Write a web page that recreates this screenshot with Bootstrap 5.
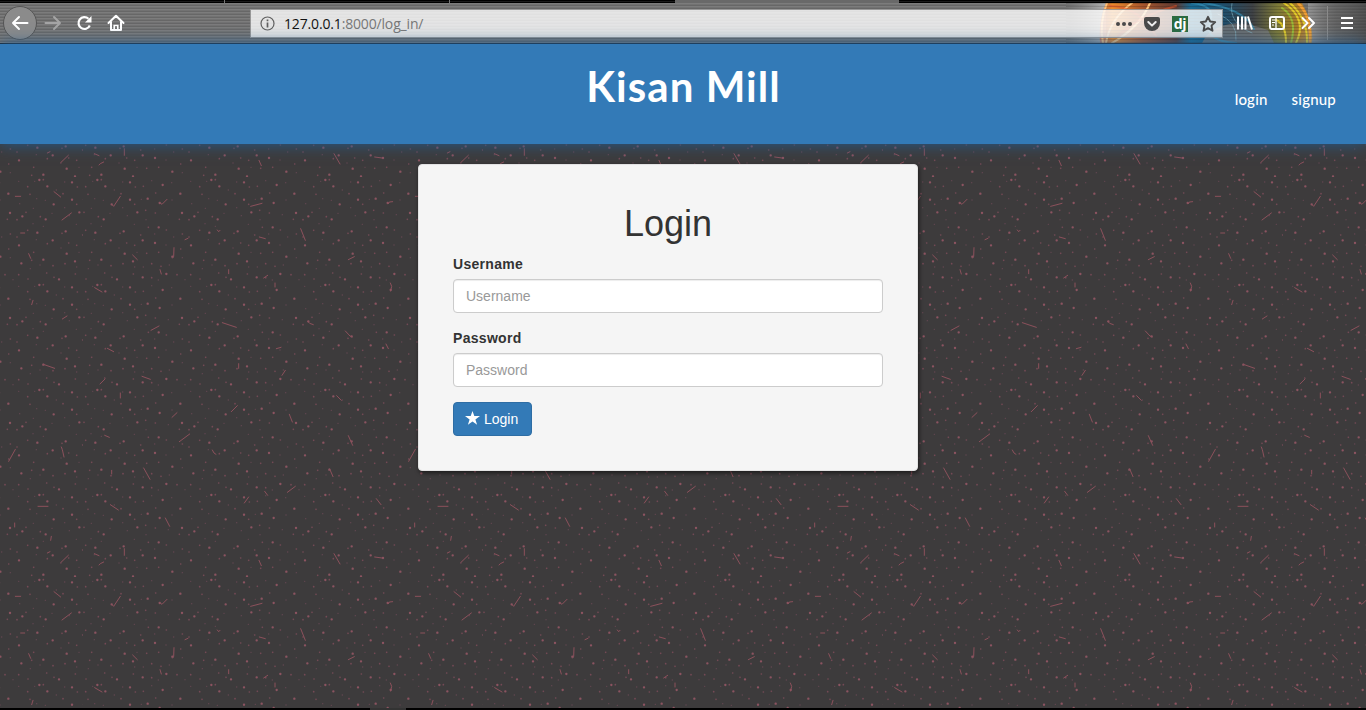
<!DOCTYPE html>
<html lang="en">
<head>
<meta charset="utf-8">
<meta name="viewport" content="width=device-width, initial-scale=1">
<title>Kisan Mill</title>
<link href="https://cdn.jsdelivr.net/npm/bootstrap@5.3.0/dist/css/bootstrap.min.css" rel="stylesheet">
<style>
html,body{height:100%;overflow:hidden}
body{font-family:"Liberation Sans",Arial,sans-serif;font-size:14px;line-height:20px;color:#333}
.tabstrip{height:3px;background:linear-gradient(#000 1px,#1b1b1b 1px 2px,#000 2px)}
.tabstrip .tab-edge{width:1px;margin-right:225px;background:#777}
.tabstrip .tab-edge.first{margin-left:224px;margin-right:224px}
.tabstrip .tab-active{width:224px;background:#696969}
.toolbar{height:41px;border-bottom:1px solid #1c2630;background:repeating-linear-gradient(#7c7c7c 0 1px,#727272 1px 2px,#676767 2px 3px)}
.theme-art{right:0;top:0;width:300px;height:40px}
.toolbar svg{display:block;flex:none}
.backbtn{width:34px;height:34px;margin-left:3px;border-radius:50%;background:#8b8b8b;border:1px solid #555}
.nav-icons{gap:14px;margin-left:13px}
.fwd-icon{margin-left:7px}
.urlbar{width:973px;height:29px;left:250px;top:6px;background:rgba(255,255,255,.8);border:1px solid rgba(100,100,100,.6);font:14px/27px "Open Sans","Noto Sans",sans-serif;color:#111}
.urlbar .dim{color:#777}
.info-icon{margin-left:9px}
.urltext{left:33px;top:0;letter-spacing:-.16px;white-space:nowrap}
.url-actions{gap:11px;margin-right:5px}
.djbadge{width:16px;height:16px;margin-left:1px;background:#2b6b41;color:#fff;font:bold 14px/15px "Open Sans",sans-serif;text-align:center;letter-spacing:-.3px}
.tool-icons{gap:14px;margin-right:10px}
.menu-icon{margin-left:8px}
.site-header{height:100px;background:#337ab7;box-shadow:0 0 15px #245d90;z-index:2}
.brand-title{font:bold 42px/46px Lato,sans-serif;letter-spacing:1.05px;color:#fff;padding:19px 0 0 1px}
.top-links{right:30px;top:45px;gap:24px}
.top-links a{font:500 15px/20px Lato,sans-serif;letter-spacing:.2px;color:#fff;text-decoration:none}
.page-area{background-color:#3d3b3c;background-position:83px 33px;background-image:url("data:image/svg+xml,%3Csvg xmlns='http://www.w3.org/2000/svg' width='400' height='400' viewBox='0 0 1200 1200'%3E%3Cdefs%3E%3Cpattern id='p' width='342' height='315' patternUnits='userSpaceOnUse'%3E%3Cg fill='none' stroke-linecap='round'%3E%3Cpath transform='translate(-195)' stroke='%238c5360' stroke-width='7' d='M238 9h.1M336 16h.1M434 24h.1M262 28h.1M487 50h.1M389 65h.1M336 68h.1M281 82h.1M425 78h.1M358 106h.1M492 108h.1M529 118h.1M257 127h.1M422 151h.1M317 163h.1M232 167h.1M278 190h.1M374 190h.1M411 198h.1M519 205h.1M320 230h.1M250 248h.1M345 253h.1M526 259h.1M463 239h.1M374 301h.1M297 307h.1M445 291h.1'/%3E%3Cpath transform='translate(-195)' stroke='%23754955' stroke-width='5' d='M203 29h.1M250 8h.1M352 30h.1M376 28h.1M210 52h.1M309 50h.1M413 48h.1M350 82h.1M383 100h.1M412 108h.1M241 119h.1M484 127h.1M513 128h.1M198 106h.1M203 160h.1M306 169h.1M368 174h.1M391 151h.1M445 159h.1M493 171h.1M513 180h.1M262 200h.1M326 198h.1M350 205h.1M221 226h.1M386 229h.1M422 226h.1M488 216h.1M215 250h.1M279 266h.1M315 260h.1M401 260h.1M429 268h.1M260 288h.1M282 301h.1M346 291h.1M401 302h.1M477 293h.1M518 293h.1M204 306h.1'/%3E%3Cpath transform='translate(-195)' stroke='%23624550' stroke-width='4' d='M224 13h.1M289 39h.1M314 15h.1M401 11h.1M461 17h.1M518 13h.1M230 65h.1M256 70h.1M314 92h.1M370 67h.1M462 69h.1M521 80h.1M220 94h.1M276 109h.1M328 116h.1M384 128h.1M451 113h.1M219 140h.1M250 148h.1M349 142h.1M410 171h.1M467 180h.1M229 188h.1M303 213h.1M357 226h.1M444 204h.1M211 275h.1M240 264h.1M350 270h.1M376 270h.1M454 264h.1M493 242h.1M501 308h.1M421 309h.1'/%3E%3C/g%3E%3C/pattern%3E%3C/defs%3E%3Crect width='1200' height='1200' fill='url(%23p)'/%3E%3Cg fill='none' stroke='%238e505b' stroke-width='2.900' stroke-linecap='round'%3E%3Cpath id='d' transform='translate(-195)' d='M108 44l20 16M132 129l28-21M282 83l5 5 20-30M427 78l5 4 15-15M698 88l34-9M1111 80l3-5 10-1M1192 58h16M8 168h12M32 230l6 14M501 188l9-4M468 212l-1 26-3 5M344 234l14 14M426 278l4 13M632 278v12M598 159l4 5 4-4M724 180l18 5M848 155l14 35M991 248l18-9M737 303l12-8M771 318v12M1117 318l4 10-3 14M230 332l22 13M45 370l-4 13M133 426l14-9M399 460l24-13M613 437l42 14M869 433l6 6 11 4M982 462l14 15 6 3M268 514l19 10M775 515l14-4M1104 501l7 14M76 562l34 12M662 560v14M802 580l-10 15M246 621l15-15M372 598l25 9M307 648v15M462 721l15-14M640 704l18-18M956 656l14 14M814 712l9 23M260 775l14 6M484 794l31-23M130 810l3 8 5 22M583 819l5 9 6 4M991 776l13 29M1172 853l20-36M377 873l19 34M281 880v11M935 876l10 23M60 988h30M277 983l24 16M808 946l24-18M692 960l-13 18M740 943l9 12M1075 965l14 18M442 1023l13 25M100 1078l-2 12M1190 1038v12M88 1128l8-4M128 1157l23-22M229 1130l14 6M319 1115v20M243 1164l4-4 10-5M723 1150l7 16M948 1130l18 31M1070 1140l22 3'/%3E%3Cuse href='%23d' x='1200'/%3E%3C/g%3E%3C/svg%3E")}
.login-panel{width:500px;height:307px;margin:20px 0 0 418px;padding:34px;background:#f5f5f5;border:1px solid #e3e3e3;border-radius:4px;box-shadow:1px 2px 4px rgba(0,0,0,.55)}
.login-panel h1{font-size:36px;line-height:40px;margin:5px 0 10px;color:#333}
.login-panel label{font-weight:700;margin-bottom:5px;display:block;letter-spacing:.3px}
.login-panel .form-control{height:34px;padding:6px 12px;font-size:14px;line-height:20px;border:1px solid #ccc;border-radius:4px;box-shadow:inset 0 1px 1px rgba(0,0,0,.075);margin-bottom:15px}
.login-panel .form-control::placeholder{color:#999}
.btn-login{height:34px;width:79px;padding:6px 0 6px 11px;font-size:14px;line-height:20px;color:#fff;background:#337ab7;border:1px solid #2e6da4;border-radius:4px}
.btn-login svg{margin-bottom:3px}
.taskbar{height:2px;background:#000}
.taskbar div{width:36px;margin-left:370px;background:#333}
</style>
</head>
<body class="d-flex flex-column">
<div class="tabstrip d-flex flex-shrink-0">
  <div class="tab-edge first"></div><div class="tab-edge"></div><div class="tab-active"></div>
</div>
<div class="toolbar position-relative d-flex align-items-center flex-shrink-0">
  <svg class="theme-art position-absolute" viewBox="1066 3 300 40" preserveAspectRatio="none">
    <defs>
      <linearGradient id="fire" x1="0" x2="1"><stop offset="0" stop-color="#e8622c" stop-opacity=".5"/><stop offset=".06" stop-color="#e98a2c"/><stop offset=".2" stop-color="#a8562c"/><stop offset=".36" stop-color="#5c3a33"/><stop offset=".43" stop-color="#1a6a92"/><stop offset=".58" stop-color="#1f4e6b"/><stop offset=".72" stop-color="#3f4245"/><stop offset=".84" stop-color="#7d7a38"/><stop offset=".94" stop-color="#b07c28"/><stop offset="1" stop-color="#c79340" stop-opacity=".6"/></linearGradient>
      <linearGradient id="dusk" x1="0" x2="1"><stop offset="0" stop-color="#aaa" stop-opacity="0"/><stop offset="1" stop-color="#ccc" stop-opacity=".7"/></linearGradient>
      <linearGradient id="side" x1="0" x2="1"><stop offset="0" stop-color="#aaa" stop-opacity=".6"/><stop offset=".5" stop-color="#555" stop-opacity=".4"/><stop offset="1" stop-color="#333" stop-opacity=".5"/></linearGradient>
      <pattern id="lines" width="3" height="3" patternUnits="userSpaceOnUse"><path d="M0 .5h3" stroke="#000" stroke-opacity=".16"/></pattern>
      <filter id="soft" x="-5%" y="-5%" width="110%" height="110%"><feGaussianBlur stdDeviation=".7"/></filter>
    </defs>
    <path d="M1066 3h40v40h-40z" fill="url(#dusk)"/>
    <path d="M1308 3h58v40h-58z" fill="url(#side)"/>
    <path d="M1106 3h196q12 20 10 40h-212q-2-22 6-40z" fill="url(#fire)"/>
    <path d="M1206 36q10-10 24-12t38 6l6 13h-72z" fill="#777" opacity=".8" filter="url(#soft)"/>
    <g fill="none" stroke-linecap="round" filter="url(#soft)">
      <path d="M1107 3q-8 20-4 40M1132 3q-22 16-26 40M1150 3q-10 24-38 40" stroke="#ffc27a" stroke-width="2"/>
      <path d="M1110 6q28 0 46 30M1118 36q20-20 58-30" stroke="#e0552c" stroke-width="2" opacity=".6"/>
      <path d="M1192 3q24 2 18 20t26 20M1204 3q40 6 50 26" stroke="#3594ba" stroke-width="2" opacity=".65"/>
      <path d="M1218 14q20 8 18 26M1232 3q-4 20 20 30" stroke="#86b5c4" opacity=".6"/>
      <path d="M1284 3q24 16 12 40M1290 3q18 16 17 40M1276 20q10 4 10 23" stroke="#e1ca2c" stroke-width="2"/>
      <path d="M1298 3q14 14 12 40" stroke="#ef9d35" stroke-width="2.5"/>
      <path d="M1282 8q16 10 9 35" stroke="#9bb837" stroke-width="2"/>
    </g>
    <path d="M1066 3h300v40h-300z" fill="url(#lines)"/>
    <path d="M1327.500 6v34" stroke="#8a8a8a"/>
  </svg>
  <div class="backbtn d-flex align-items-center justify-content-center"><svg width="18" height="18" viewBox="0 0 18 18" fill="none" stroke="#fff" stroke-width="2" stroke-linecap="round" stroke-linejoin="round"><path d="M16.500 9H2M8 3L2 9l6 6"/></svg></div>
  <svg class="fwd-icon" width="18" height="18" viewBox="0 0 18 18" fill="none" stroke="#a5a5a5" stroke-width="2" stroke-linecap="round" stroke-linejoin="round"><path d="M1.500 9H16M10 3l6 6-6 6"/></svg>
  <div class="nav-icons d-flex">
    <svg width="18" height="18" viewBox="0 0 18 18" fill="none" stroke="#fff" stroke-width="2.200"><path d="M13.500 4.800A5.900 5.900 0 1 0 14.800 11.500"/><path d="M16.500 2v6.500H10z" fill="#fff" stroke="none"/></svg>
    <svg width="18" height="18" viewBox="0 0 18 18"><path d="M1.500 9L9 1.700 16.500 9M4 8v8h10V8" fill="none" stroke="#fff" stroke-width="2" stroke-linecap="round" stroke-linejoin="round"/><path d="M7.200 16v-4.500h3.600V16" fill="none" stroke="#fff" stroke-width="1.600"/></svg>
  </div>
  <div class="urlbar position-absolute d-flex align-items-center">
    <svg class="info-icon" width="15" height="15" viewBox="0 0 15 15" fill="none" stroke="#606060"><circle cx="7.500" cy="7.500" r="6.500" stroke-width="1.200"/><path d="M7.500 6.500v5M7.500 3.500v1.700" stroke-width="1.700"/></svg>
    <span class="urltext position-absolute">127.0.0.1<span class="dim">:8000/log_in/</span></span>
    <div class="url-actions ms-auto d-flex align-items-center">
      <svg width="18" height="18" viewBox="0 0 18 18" fill="#4a4a4a"><circle cx="3" cy="9" r="2"/><circle cx="9" cy="9" r="2"/><circle cx="15" cy="9" r="2"/></svg>
      <svg width="16" height="16" viewBox="0 0 16 16"><path d="M2 1h12q2 0 2 2v4a8 8 0 0 1-16 0V3q0-2 2-2z" fill="#4a4a4a"/><path d="M4.300 6L8 9.600 11.700 6" fill="none" stroke="#eee" stroke-width="2" stroke-linecap="round" stroke-linejoin="round"/></svg>
      <div class="djbadge">dj</div>
      <svg width="18" height="18" viewBox="0 0 18 18"><path d="M9 1.800l2.200 4.700 5 .6-3.700 3.500 1 5.100L9 13.200l-4.500 2.500 1-5.100L1.800 7.100l5-.6z" fill="none" stroke="#4a4a4a" stroke-width="1.900" stroke-linejoin="round"/></svg>
    </div>
  </div>
  <div class="tool-icons position-relative ms-auto d-flex align-items-center">
    <svg width="18" height="16" viewBox="0 0 18 16" stroke="#fff" stroke-width="2" fill="none"><path d="M2 1.500v13M6 1.500v13M9.500 1.500v13M12 1.500l4 13"/></svg>
    <svg width="18" height="16" viewBox="0 0 18 16" stroke="#fff" fill="none"><rect x="2" y="2" width="14" height="12" rx="2" stroke-width="2"/><path d="M8 2v12" stroke-width="1.300"/><path d="M4 5h3M4 7.500h3M4 10h2"/></svg>
    <svg width="16" height="16" viewBox="0 0 16 16" stroke="#fff" stroke-width="2" stroke-linecap="round" stroke-linejoin="round" fill="none"><path d="M2.500 3l5 5-5 5M9 3l5 5-5 5"/></svg>
    <svg class="menu-icon" width="18" height="16" viewBox="0 0 18 16" stroke="#fff" stroke-width="2"><path d="M3 3h12M3 8h12M3 13h12"/></svg>
  </div>
</div>
<header class="site-header position-relative d-flex justify-content-center flex-shrink-0">
  <div class="brand-title">Kisan Mill</div>
  <nav class="top-links position-absolute d-flex"><a href="#">login</a><a href="#">signup</a></nav>
</header>
<main class="page-area flex-grow-1 overflow-hidden">
  <form class="login-panel">
    <h1 class="text-center fw-normal">Login</h1>
    <label for="user">Username</label>
    <input id="user" class="form-control" placeholder="Username">
    <label for="pass">Password</label>
    <input id="pass" type="password" class="form-control" placeholder="Password">
    <button type="button" class="btn-login d-inline-flex align-items-center"><svg class="me-1" width="15" height="14" viewBox="0 0 15 14" fill="#fff"><path d="M7.500 0l1.800 5.100H15l-4.600 3.400 1.700 5.200-4.600-3.200-4.600 3.200 1.700-5.200L0 5.100h5.700z"/></svg>Login</button>
  </form>
</main>
<div class="taskbar d-flex flex-shrink-0"><div></div></div>
<script src="https://cdn.jsdelivr.net/npm/bootstrap@5.3.0/dist/js/bootstrap.bundle.min.js"></script>
</body>
</html>
